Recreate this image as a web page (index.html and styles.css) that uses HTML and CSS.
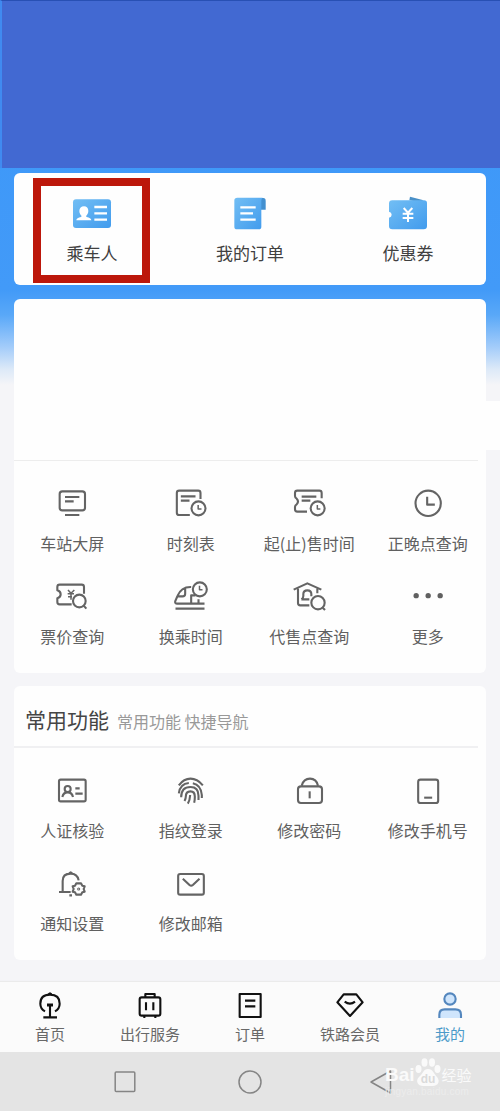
FILE: index.html
```html
<!DOCTYPE html>
<html lang="zh-CN">
<head>
<meta charset="utf-8">
<title>我的</title>
<link rel="stylesheet" href="styles.css">
</head>
<body>
<div class="screen">
  <header class="banner"></header>

  <main class="content">
    <section class="card quick">
      <a class="quick-item">
        <svg class="quick-icon" viewBox="207 102 138 120">
          <defs><linearGradient id="blue" x1="0" y1="0" x2="1" y2="1"><stop offset="0" stop-color="#72bef4"/><stop offset="1" stop-color="#419bed"/></linearGradient></defs>
          <rect x="219" y="118" width="114" height="86" rx="9" fill="url(#blue)"/>
          <path d="M252 139c8 0 13 6 13 14s-4 12-7 15c0 5 15 3 16 13h-45c1-10 16-8 16-13-3-3-7-7-7-15s6-14 14-14z" fill="#fff"/>
          <path d="M283 141h38M283 160h38M283 179h38" stroke="#fff" stroke-width="7"/>
        </svg>
        <span>乘车人</span>
        <i class="highlight"></i>
      </a>
      <a class="quick-item">
        <svg class="quick-icon" viewBox="681 102 138 120">
          <path d="M776 114h14q7 0 7 8v27h-14z" fill="#4390d0"/>
          <path d="M712 113h76q-4 3-4 9v78q0 8-8 8h-65q-8 0-8-8v-79q0-8 9-8z" fill="url(#blue)"/>
          <path d="M721 142h46M721 160h38M721 179h46" stroke="#fff" stroke-width="7"/>
        </svg>
        <span>我的订单</span>
      </a>
      <a class="quick-item">
        <svg class="quick-icon" viewBox="405 102 138 120">
          <path d="M478 121l2-11 38 10v8z" fill="#4a90c8"/>
          <path d="M427 121h95q9 0 9 8v69q0 10-10 10h-94q-10 0-10-9v-26q8-2 8-9t-8-9v-24q0-10 10-10z" fill="url(#blue)"/>
          <path d="M461 144l13 14 13-14M474 158v28M458 161h32M458 174h32" fill="none" stroke="#fff" stroke-width="6"/>
        </svg>
        <span>优惠券</span>
      </a>
    </section>

    <section class="card services">
      <div class="blank"></div>
      <i class="patch"></i>
      <div class="grid">
        <a class="item">
          <svg class="icon" viewBox="162 51 108 96"><rect x="179" y="64" width="76" height="57" rx="8"/><path d="M195 81h43M195 94h26M195 135h43"/></svg>
          <span>车站大屏</span>
        </a>
        <a class="item">
          <svg class="icon" viewBox="517.5 51 108 96"><path d="M600 87V69q0-7-7-7h-57q-7 0-7 7v59q0 7 7 7h32M541 79h44M541 92h26"/><circle cx="594" cy="115" r="21"/><path d="M593 105v12h10" class="fine"/></svg>
          <span>时刻表</span>
        </a>
        <a class="item">
          <svg class="icon" viewBox="123 51 108 96"><path d="M215 85V69q0-7-7-7h-66q-7 0-7 7v9q0 5 5 8 8 8 0 17-5 3-5 8v7q0 7 7 7h29M155 80h44M155 92h26"/><circle cx="203" cy="115" r="21"/><path d="M202 105v12h9" class="fine"/></svg>
          <span>起(止)售时间</span>
        </a>
        <a class="item">
          <svg class="icon" viewBox="478.5 51 108 96"><circle cx="533" cy="100" r="38"/><path d="M530 80v24h23"/></svg>
          <span>正晚点查询</span>
        </a>
        <a class="item">
          <svg class="icon" viewBox="162 330 108 96"><path d="M252 371V351q0-7-7-7h-66q-7 0-7 7v10q10 3 10 12t-10 12v11q0 7 7 7h36"/><path d="M204 360l9 10 10-10M213 370v19M203 371h19M204 380h12" class="fine"/><circle cx="238" cy="393" r="19"/><path d="M251 407l8 9"/></svg>
          <span>票价查询</span>
        </a>
        <a class="item">
          <svg class="icon" viewBox="517.5 330 108 96"><path d="M572 351q-30-1-41 27l-7 16q-1 7 6 7h82M533 379h13q8 0 8-8v-15M572 400v-24h13M594 388v12M525 416h87"/><circle cx="598" cy="358" r="21"/><path d="M597 347v12h9" class="fine"/></svg>
          <span>换乘时间</span>
        </a>
        <a class="item">
          <svg class="icon" viewBox="123 330 108 96"><path d="M131 359l41-19 42 19M144 356v43q0 7 7 7h27M202 356v14M154 388q6-3 6-10v-6q0-11 12-11t12 11v7M154 388h24"/><circle cx="204" cy="398" r="20"/><path d="M218 413l7 7"/></svg>
          <span>代售点查询</span>
        </a>
        <a class="item">
          <svg class="icon dots" viewBox="478.5 330 108 96"><circle cx="497" cy="377" r="8"/><circle cx="533" cy="377" r="8"/><circle cx="569" cy="377" r="8"/></svg>
          <span>更多</span>
        </a>
      </div>
    </section>

    <section class="card common">
      <h2 class="heading">常用功能<small>常用功能 快捷导航</small></h2>
      <div class="grid">
        <a class="item">
          <svg class="icon" viewBox="162 315 108 96"><rect x="177" y="329" width="80" height="65" rx="5"/><circle cx="203" cy="357" r="9"/><path d="M187 381q3-14 16-14t16 14M226 355h13M226 371h22"/></svg>
          <span>人证核验</span>
        </a>
        <a class="item">
          <svg class="icon" viewBox="517.5 315 108 96"><path d="M535 346q15-20 35-20t37 20M535 370q4-29 30-31M577 340q24 5 27 35v9M542 382q0-31 28-31 24 0 24 26v13M552 393q4-6 4-14 0-15 14-15 13 0 13 16 0 11-2 18M562 401q6-9 7-26"/></svg>
          <span>指纹登录</span>
        </a>
        <a class="item">
          <svg class="icon" viewBox="123 315 108 96"><path d="M155 347q6-21 25-21t24 21"/><rect x="144" y="349" width="72" height="50" rx="9"/><path d="M179 364v21"/></svg>
          <span>修改密码</span>
        </a>
        <a class="item">
          <svg class="icon" viewBox="478.5 315 108 96"><rect x="503" y="329" width="60" height="70" rx="7"/><path d="M521 383h24"/></svg>
          <span>修改手机号</span>
        </a>
        <a class="item">
          <svg class="icon" viewBox="162 54 108 96"><path d="M177 126h35M188 125V93q0-22 24-22 20 0 24 20M207 70l5-3 5 3M208 136h8"/><path d="M229 100h14l4 7 7 2-3 8 3 8-7 2-4 7h-14l-4-7-7-2 3-8-3-8 7-2z"/><circle cx="236" cy="117" r="1.5"/></svg>
          <span>通知设置</span>
        </a>
        <a class="item">
          <svg class="icon" viewBox="517.5 54 108 96"><rect x="533" y="72" width="77" height="62" rx="6"/><path d="M547 86l20 19q5 4 10 0l20-19"/></svg>
          <span>修改邮箱</span>
        </a>
      </div>
    </section>
  </main>

  <nav class="tabs">
    <a class="tab">
      <svg class="tab-icon" viewBox="96 45 108 96"><path d="M135 109q-14-8-14-23 0-27 29-27t29 27q0 15-14 23M145 58l5-3 5 3M150 91v36M130 127h41"/><path d="M141 90h18" stroke-width="9"/></svg>
      <span>首页</span>
    </a>
    <a class="tab">
      <svg class="tab-icon" viewBox="396 45 108 96"><rect x="419" y="67" width="62" height="55" rx="6"/><path d="M436 66v-9h28v9M438 82v24M460 82v24M433 122v7M466 122v7"/></svg>
      <span>出行服务</span>
    </a>
    <a class="tab">
      <svg class="tab-icon" viewBox="696 45 108 96"><rect x="719" y="57" width="63" height="69"/><path d="M735 77h31M735 94h31"/></svg>
      <span>订单</span>
    </a>
    <a class="tab">
      <svg class="tab-icon" viewBox="246 45 108 96"><path d="M281 58h38l19 24-38 41-38-41zM284 80q16 12 31 0"/></svg>
      <span>铁路会员</span>
    </a>
    <a class="tab active">
      <svg class="tab-icon" viewBox="546 45 108 96"><circle cx="600" cy="72" r="17"/><path d="M568 129v-10q0-16 16-16h32q17 0 17 16v10"/></svg>
      <span>我的</span>
    </a>
  </nav>

  <footer class="system">
    <svg class="key" viewBox="0 0 24 24"><rect x="2.2" y="2" width="19.6" height="19.6" rx="1"/></svg>
    <svg class="key" viewBox="0 0 24 24"><circle cx="12" cy="12" r="11"/></svg>
    <svg class="key back" viewBox="0 0 30 24"><path d="M27.5 1v22L8 12z"/></svg>
    <div class="watermark">
      <div class="mark"><span>Bai</span>
        <svg class="paw" viewBox="0 0 26 28"><ellipse cx="3.5" cy="11" rx="3" ry="4"/><ellipse cx="9.5" cy="4.5" rx="3" ry="4.2"/><ellipse cx="17" cy="4.5" rx="3" ry="4.2"/><ellipse cx="22.5" cy="11" rx="3" ry="4"/><path d="M13 11c5 0 6 5 9 8 4 5 0 9-4 9H8c-5 0-8-5-4-9 4-3 4-8 9-8z"/><text x="13" y="25">du</text></svg>
        <span class="word">经验</span></div>
      <div class="url">jingyan.baidu.com</div>
    </div>
  </footer>
</div>
</body>
</html>
```
FILE: styles.css
```css
* { box-sizing: border-box; }

body {
  margin: 0;
  font-family: "Noto Sans CJK SC", sans-serif;
  color: #606060;
}

.screen {
  display: flex;
  flex-direction: column;
  width: 500px;
  height: 1111px;
  overflow: hidden;
  background: linear-gradient(#3b97f9 0, #429af8 290px, #59a8f8 315px, #a3ccfa 347px, #dce9f8 369px, #f5f5f8 385px);
}

.banner {
  height: 168px;
  background: #4269d2;
  border-top: 1px solid #2850b4;
  border-left: 2px solid #408af0;
}

.content {
  display: flex;
  flex-direction: column;
  height: 814px;
  padding: 5px 14px 0;
}

.card {
  background: #fefefe;
  border-radius: 6px;
}

.quick {
  display: grid;
  grid-template-columns: repeat(3, 158px);
  justify-content: center;
  height: 112px;
  margin-bottom: 14px;
}

.quick-item {
  position: relative;
  display: flex;
  flex-direction: column;
  align-items: center;
  padding-top: 21px;
  font-size: 17px;
  line-height: 26px;
  color: #404040;
}

.quick-icon {
  width: 46px;
  height: 40px;
  margin-bottom: 6px;
}

.highlight {
  position: absolute;
  left: 20px;
  top: 5px;
  width: 117px;
  height: 105px;
  border: 8px solid #bc170b;
}

.services {
  position: relative;
  height: 374px;
  margin-bottom: 13px;
}

.blank {
  height: 162px;
  margin-right: 8px;
  border-bottom: 1px solid #ededed;
}

.patch {
  position: absolute;
  left: 470px;
  top: 102px;
  width: 16px;
  height: 49px;
  background: #fefefe;
}

.grid {
  display: grid;
  grid-template-columns: repeat(4, 118.5px);
  row-gap: 24px;
  justify-content: center;
  padding-top: 26px;
}

.item {
  display: flex;
  flex-direction: column;
  align-items: center;
  gap: 12px;
  height: 69px;
  font-size: 16px;
  line-height: 24px;
  white-space: nowrap;
}

.icon {
  width: 36px;
  height: 32px;
  fill: none;
  stroke: #646464;
  stroke-width: 6.3;
  stroke-linecap: butt;
  stroke-linejoin: round;
}

.fine { stroke-width: 4.5; }

.dots {
  fill: #606060;
  stroke: none;
}

.common { height: 274px; }

.heading {
  display: flex;
  align-items: baseline;
  gap: 8px;
  height: 62px;
  margin: 0 8px 0 0;
  padding: 18px 0 0 11px;
  border-bottom: 2px solid #f0f0f2;
  font-size: 21px;
  font-weight: 400;
  line-height: 30px;
  color: #454545;
}

.heading small {
  font-size: 16px;
  color: #999;
}

.heading + .grid { padding-top: 27px; }

.common .item { gap: 11px; }

.tabs {
  display: grid;
  grid-template-columns: repeat(5, 100px);
  height: 70px;
  background: #fbfbfb;
  box-shadow: 0 -1px 1px #ebebeb;
}

.tab {
  display: flex;
  flex-direction: column;
  align-items: center;
  padding-top: 8px;
  font-size: 15px;
  line-height: 24px;
  color: #686868;
}

.tab-icon {
  width: 36px;
  height: 32px;
  fill: none;
  stroke: #111;
  stroke-width: 6.3;
  stroke-linejoin: round;
}

.active { color: #4b9ac9; }

.active .tab-icon {
  fill: #cfe5fc;
  stroke: #5487be;
}

.system {
  position: relative;
  display: flex;
  gap: 101px;
  height: 59px;
  padding: 18px 0 0 113px;
  background: #e4e4e4;
}

.key {
  width: 24px;
  height: 24px;
  fill: none;
  stroke: #858585;
  stroke-width: 1.5;
  stroke-linejoin: round;
}

.back { width: 30px; }

.watermark {
  position: absolute;
  left: 385px;
  top: 6px;
  width: 90px;
  color: #fafafa;
}

.mark {
  display: flex;
  align-items: flex-end;
  height: 28px;
  font: 700 19px/22px "Liberation Sans", sans-serif;
}

.paw {
  width: 26px;
  height: 28px;
  flex: none;
  fill: #fafafa;
}

.paw text {
  font: 700 12px "Liberation Sans", sans-serif;
  text-anchor: middle;
  fill: #dadada;
}

.word {
  margin-left: 1px;
  font: 400 15px/22px "Noto Sans CJK SC", sans-serif;
}

.url {
  font: 10px/11px "Liberation Sans", sans-serif;
  letter-spacing: .2px;
  color: #ececec;
}
```
